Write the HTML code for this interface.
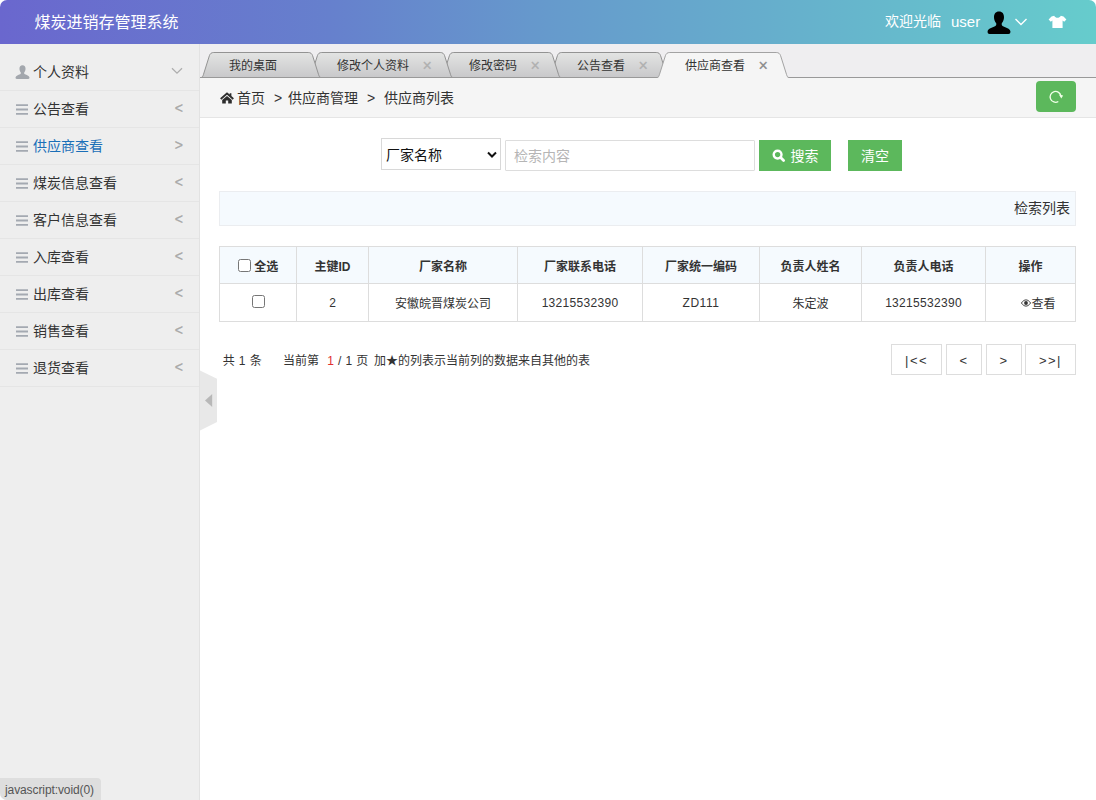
<!DOCTYPE html>
<html lang="zh-CN">
<head>
<meta charset="utf-8">
<title>煤炭进销存管理系统</title>
<style>
*{box-sizing:border-box;margin:0;padding:0}
html,body{width:1096px;height:800px;overflow:hidden;background:#fff}
body{font-family:"Liberation Sans","Noto Sans CJK SC",sans-serif;font-size:14px;color:#333;position:relative}
#hdr{position:absolute;left:0;top:0;width:1096px;height:44px;border-radius:7px 7px 0 0;
 background:linear-gradient(90deg,#6a67ce 0%,#6680cd 30%,#669acc 50%,#66b3cc 75%,#66cccc 100%);color:#fff}
#hdr .title{position:absolute;left:34.5px;top:1px;line-height:44px;font-size:16px}
#hdr .wel{position:absolute;left:885px;top:0;line-height:43px;font-size:14px}
#hdr .usr{position:absolute;left:951px;top:0;line-height:43px;font-size:15px}
#side{position:absolute;left:0;top:44px;width:200px;height:756px;background:#eeeeee;border-right:1px solid #e2e2e2;border-bottom-left-radius:7px}
#side ul{list-style:none;margin-top:10px}
#side li{height:37px;line-height:37px;border-bottom:1px solid #e5e5e5;position:relative;padding-left:33px;font-size:14px;color:#333}
#side li.on{color:#1a6fb8}
#side li .ic{position:absolute;left:15px;top:0}
#side li .ar{position:absolute;right:16px;top:-1px;color:#a8a8a8;font-size:14px;-webkit-text-stroke:.3px #a8a8a8}
#tabs{position:absolute;left:200px;top:44px;width:896px;height:34px;background:#efeef0}
#tabs .tt{position:absolute;top:10px;line-height:24px;font-size:12px;color:#333}
#tabs .tx{position:absolute;top:9.5px;line-height:24px;font-size:16px;color:#b0b0b0;margin-left:.5px;-webkit-text-stroke:.3px #b0b0b0}
#tabs .tx.on{color:#8c8c8c;-webkit-text-stroke:.3px #8c8c8c}
#crumb{position:absolute;left:200px;top:78px;width:896px;height:40px;background:#f5f5f5;border-bottom:1px solid #e5e5e5;line-height:41px;font-size:14px}
#crumb .home{position:absolute;left:19.5px;top:13.5px}
#crumb .c1{position:absolute;left:37px;top:0}
#crumb .g1{position:absolute;left:74px;top:0}
#crumb .c2{position:absolute;left:88px;top:0}
#crumb .g2{position:absolute;left:167px;top:0}
#crumb .c3{position:absolute;left:184px;top:0}
#crumb .rf{position:absolute;left:836px;top:3px;width:40px;height:31px;background:#5cb85c;border-radius:4px}
#main{position:absolute;left:200px;top:118px;width:896px;height:682px;background:#fff}
#main .sel{position:absolute;left:181px;top:20px;width:120px;height:32px;border:1px solid #d8d8d8;background:#fff;font-size:14px;line-height:32px;padding-left:4px;color:#111}
#main .inp{position:absolute;left:305px;top:22px;width:250px;height:31px;border:1px solid #ddd;border-radius:1px;background:#fff;font-size:14px;line-height:30px;padding-left:8px;color:#b5b5b5}
#main .btn{position:absolute;top:22px;height:31px;background:#5cb85c;color:#fff;font-size:14px;line-height:32px;text-align:center}
#main .b1{left:559px;width:72px;padding-left:19px}
#main .b2{left:648px;width:54px}
#main .bar{position:absolute;left:19px;top:73px;width:857px;height:35px;background:#f5fafe;border:1px solid #ebedf0;text-align:right;padding-right:5px;line-height:32px;font-size:14px;color:#333}
#tbl{position:absolute;left:19px;top:128px;width:856px;border-collapse:collapse;font-size:12px;color:#333;table-layout:fixed}
#tbl th,#tbl td{border:1px solid #ddd;height:38px;text-align:center;vertical-align:middle;padding:0}
#tbl td{padding-top:1px}
#tbl td.n{letter-spacing:.3px}
#tbl td.c{padding-top:0;padding-bottom:1px}
#tbl th{background:#f5fafe;font-weight:bold;height:37px;padding-top:1px}
#tbl th .cb{top:-2.5px}
.cb{display:inline-block;width:13px;height:13px;border:1px solid #767676;border-radius:2.5px;background:#fff;vertical-align:middle;position:relative;top:-2.5px}
#pg span{position:absolute;top:233px;font-size:12px;line-height:20px;color:#333;white-space:pre;word-spacing:.8px}
#pg b{font-weight:normal;color:#e03030}
.pb{position:absolute;top:226px;height:31px;border:1px solid #ddd;background:#fff;text-align:center;line-height:31px;font-size:13px;color:#333;letter-spacing:1.4px}
#hand{position:absolute;left:200px;top:370px}
#status{position:absolute;left:0;bottom:0;height:22px;width:101px;background:#dedede;border-radius:0 4px 0 7px;font-size:12px;color:#555;line-height:24px;padding-left:5px;letter-spacing:-.1px}
</style>
</head>
<body>
<div id="hdr">
  <div class="title">煤炭进销存管理系统</div>
  <div class="wel">欢迎光临</div>
  <div class="usr">user</div>
  <svg style="position:absolute;left:987px;top:11px" width="24" height="24" viewBox="0 0 24 24"><path d="M12,0.6 C8.6,0.6 7,3 7,6.2 C7,8.6 7.9,10.8 9.2,12.2 C9.5,13.6 9.2,14.6 8,15.2 C5.2,16.6 1.2,17.4 0.6,20.2 C0.4,21.6 1,23 2.6,23 L21.4,23 C23,23 23.6,21.6 23.4,20.2 C22.8,17.4 18.8,16.6 16,15.2 C14.8,14.6 14.5,13.6 14.8,12.2 C16.1,10.8 17,8.6 17,6.2 C17,3 15.4,0.6 12,0.6 Z" fill="#000"/></svg>
  <svg style="position:absolute;left:1014px;top:17px" width="14" height="10" viewBox="0 0 14 10"><path d="M1.5,2 L7,7.5 L12.5,2" fill="none" stroke="#fff" stroke-width="1.4"/></svg>
  <svg style="position:absolute;left:1048px;top:15px" width="19" height="14" viewBox="0 0 19 14"><path d="M6.2,0.8 C7,2.2 8.2,2.8 9.5,2.8 C10.8,2.8 12,2.2 12.8,0.8 L15.5,1.6 L18.4,4.6 L16.2,6.8 L14.6,5.6 L14.6,13 L4.4,13 L4.4,5.6 L2.8,6.8 L0.6,4.6 L3.5,1.6 Z" fill="#fff"/></svg>
</div>
<div id="side">
  <ul>
    <li><svg class="ic" style="top:11px" width="15" height="14" viewBox="0 0 24 23"><path d="M12,0.6 C8.6,0.6 7,3 7,6.2 C7,8.6 7.9,10.8 9.2,12.2 C9.5,13.6 9.2,14.6 8,15.2 C5.2,16.6 1.2,17.4 0.6,20.2 C0.4,21.6 1,23 2.6,23 L21.4,23 C23,23 23.6,21.6 23.4,20.2 C22.8,17.4 18.8,16.6 16,15.2 C14.8,14.6 14.5,13.6 14.8,12.2 C16.1,10.8 17,8.6 17,6.2 C17,3 15.4,0.6 12,0.6 Z" fill="#a3a7ad"/></svg>个人资料<svg style="position:absolute;left:171px;top:13px" width="12" height="8" viewBox="0 0 12 8"><path d="M1,1.2 L6,6.2 L11,1.2" fill="none" stroke="#aeaeae" stroke-width="1.3"/></svg></li>
    <li><svg class="ic" style="left:16px;top:13px" width="12" height="11" viewBox="0 0 12 11"><path d="M0,1.2 H12 M0,5.5 H12 M0,9.8 H12" stroke="#a4a9b1" stroke-width="1.8"/></svg>公告查看<span class="ar">&lt;</span></li>
    <li class="on"><svg class="ic" style="left:16px;top:13px" width="12" height="11" viewBox="0 0 12 11"><path d="M0,1.2 H12 M0,5.5 H12 M0,9.8 H12" stroke="#a4a9b1" stroke-width="1.8"/></svg>供应商查看<span class="ar">&gt;</span></li>
    <li><svg class="ic" style="left:16px;top:13px" width="12" height="11" viewBox="0 0 12 11"><path d="M0,1.2 H12 M0,5.5 H12 M0,9.8 H12" stroke="#a4a9b1" stroke-width="1.8"/></svg>煤炭信息查看<span class="ar">&lt;</span></li>
    <li><svg class="ic" style="left:16px;top:13px" width="12" height="11" viewBox="0 0 12 11"><path d="M0,1.2 H12 M0,5.5 H12 M0,9.8 H12" stroke="#a4a9b1" stroke-width="1.8"/></svg>客户信息查看<span class="ar">&lt;</span></li>
    <li><svg class="ic" style="left:16px;top:13px" width="12" height="11" viewBox="0 0 12 11"><path d="M0,1.2 H12 M0,5.5 H12 M0,9.8 H12" stroke="#a4a9b1" stroke-width="1.8"/></svg>入库查看<span class="ar">&lt;</span></li>
    <li><svg class="ic" style="left:16px;top:13px" width="12" height="11" viewBox="0 0 12 11"><path d="M0,1.2 H12 M0,5.5 H12 M0,9.8 H12" stroke="#a4a9b1" stroke-width="1.8"/></svg>出库查看<span class="ar">&lt;</span></li>
    <li><svg class="ic" style="left:16px;top:13px" width="12" height="11" viewBox="0 0 12 11"><path d="M0,1.2 H12 M0,5.5 H12 M0,9.8 H12" stroke="#a4a9b1" stroke-width="1.8"/></svg>销售查看<span class="ar">&lt;</span></li>
    <li><svg class="ic" style="left:16px;top:13px" width="12" height="11" viewBox="0 0 12 11"><path d="M0,1.2 H12 M0,5.5 H12 M0,9.8 H12" stroke="#a4a9b1" stroke-width="1.8"/></svg>退货查看<span class="ar">&lt;</span></li>
  </ul>
</div>
<div id="tabs">
<svg width="896" height="34" viewBox="0 0 896 34" style="position:absolute;left:0;top:0">
<defs><linearGradient id="tg" x1="0" y1="0" x2="0" y2="1"><stop offset="0" stop-color="#e3e4e3"/><stop offset="1" stop-color="#c8c8ca"/></linearGradient></defs>
<path d="M349.0,33.5 C350.4,33.5 350.9,32.3 351.4,30.7 L357.4,11.7 C358.2,9.5 359.4,8.5 361.8,8.5 L456.2,8.5 C458.6,8.5 459.8,9.5 460.6,11.7 L466.6,30.7 C467.1,32.3 467.6,33.5 469.0,33.5" fill="url(#tg)" stroke="#939393" stroke-width="1"/>
<path d="M241.0,33.5 C242.4,33.5 242.9,32.3 243.4,30.7 L249.4,11.7 C250.2,9.5 251.4,8.5 253.8,8.5 L348.2,8.5 C350.6,8.5 351.8,9.5 352.6,11.7 L358.6,30.7 C359.1,32.3 359.6,33.5 361.0,33.5" fill="url(#tg)" stroke="#939393" stroke-width="1"/>
<path d="M109.0,33.5 C110.4,33.5 110.9,32.3 111.4,30.7 L117.4,11.7 C118.2,9.5 119.4,8.5 121.8,8.5 L240.2,8.5 C242.6,8.5 243.8,9.5 244.6,11.7 L250.6,30.7 C251.1,32.3 251.6,33.5 253.0,33.5" fill="url(#tg)" stroke="#939393" stroke-width="1"/>
<path d="M1.0,33.5 C2.4,33.5 2.9,32.3 3.4,30.7 L9.4,11.7 C10.2,9.5 11.4,8.5 13.8,8.5 L108.2,8.5 C110.6,8.5 111.8,9.5 112.6,11.7 L118.6,30.7 C119.1,32.3 119.6,33.5 121.0,33.5" fill="url(#tg)" stroke="#939393" stroke-width="1"/>
<line x1="0" y1="33.5" x2="896" y2="33.5" stroke="#999" stroke-width="1"/>
<path d="M457.0,33.5 C458.4,33.5 458.9,32.3 459.4,30.7 L465.4,11.7 C466.2,9.5 467.4,8.5 469.8,8.5 L576.2,8.5 C578.6,8.5 579.8,9.5 580.6,11.7 L586.6,30.7 C587.1,32.3 587.6,33.5 589.0,33.5 Z" fill="#f5f5f5" stroke="none"/>
<path d="M457.0,33.5 C458.4,33.5 458.9,32.3 459.4,30.7 L465.4,11.7 C466.2,9.5 467.4,8.5 469.8,8.5 L576.2,8.5 C578.6,8.5 579.8,9.5 580.6,11.7 L586.6,30.7 C587.1,32.3 587.6,33.5 589.0,33.5" fill="none" stroke="#a3a3a3" stroke-width="1"/>
<line x1="458.5" y1="33.5" x2="587.5" y2="33.5" stroke="#f5f5f5" stroke-width="1.2"/>
</svg>
<span class="tt" style="left:29px">我的桌面</span>
<span class="tt" style="left:137px">修改个人资料</span><span class="tx" style="left:222px">×</span>
<span class="tt" style="left:269px">修改密码</span><span class="tx" style="left:330px">×</span>
<span class="tt" style="left:377px">公告查看</span><span class="tx" style="left:438px">×</span>
<span class="tt on" style="left:485px">供应商查看</span><span class="tx on" style="left:558px">×</span>
</div>
<div id="crumb">
<svg class="home" width="14" height="12" viewBox="0 0 14 12"><path d="M7,0.2 L0.1,6.3 L1.3,7.7 L7,2.8 L12.7,7.7 L13.9,6.3 L11.4,4.1 L11.4,1.2 L9.7,1.2 L9.7,2.6 Z M7,4 L2.2,8.1 L2.2,11.6 L5.8,11.6 L5.8,8.6 L8.2,8.6 L8.2,11.6 L11.8,11.6 L11.8,8.1 Z" fill="#2d2d2d"/></svg>
<span class="c1">首页</span><span class="g1">&gt;</span><span class="c2">供应商管理</span><span class="g2">&gt;</span><span class="c3">供应商列表</span>
<div class="rf"><svg width="40" height="31" viewBox="0 0 40 31"><path d="M24.9,15.2 A5.4,5.4 0 1 0 22.3,20.5" fill="none" stroke="#f0ffe8" stroke-width="1.3"/><path d="M22.9,13.6 L27.1,14.4 L25.3,17.6 Z" fill="#f0ffe8"/></svg></div>
</div>
<div id="main">
<div class="sel">厂家名称<svg style="position:absolute;right:3px;top:12px" width="10" height="8" viewBox="0 0 10 8"><path d="M1,1.5 L5,5.5 L9,1.5" fill="none" stroke="#111" stroke-width="2"/></svg></div>
<div class="inp">检索内容</div>
<div class="btn b1"><svg style="position:absolute;left:13px;top:9px" width="14" height="14" viewBox="0 0 14 14"><circle cx="5.6" cy="5.6" r="3.9" fill="none" stroke="#fff" stroke-width="2.4"/><path d="M8.6,8.6 L11.6,11.6" stroke="#fff" stroke-width="2.8" stroke-linecap="round"/></svg>搜索</div>
<div class="btn b2">清空</div>
<div class="bar">检索列表</div>
<table id="tbl">
<colgroup><col style="width:77px"><col style="width:72px"><col style="width:149px"><col style="width:125px"><col style="width:117px"><col style="width:102px"><col style="width:124px"><col style="width:90px"></colgroup>
<tr><th><span class="cb"></span> 全选</th><th>主键ID</th><th>厂家名称</th><th>厂家联系电话</th><th>厂家统一编码</th><th>负责人姓名</th><th>负责人电话</th><th>操作</th></tr>
<tr><td><span class="cb"></span></td><td>2</td><td class="c">安徽皖晋煤炭公司</td><td class="n">13215532390</td><td class="n" style="letter-spacing:.55px">ZD111</td><td class="c">朱定波</td><td class="n">13215532390</td><td class="c"><svg style="vertical-align:1px;margin-left:16px" width="10" height="8" viewBox="0 0 10 8"><path d="M0.4,4 C2,1.6 3.6,0.9 5,0.9 C6.4,0.9 8,1.6 9.6,4 C8,6.4 6.4,7.1 5,7.1 C3.6,7.1 2,6.4 0.4,4 Z" fill="none" stroke="#333" stroke-width="0.9"/><circle cx="5" cy="4" r="1.9" fill="#333"/></svg>查看</td></tr>
</table>
<div id="pg"><span style="left:22.7px">共 1 条</span><span style="left:82.9px">当前第  <b>1</b> / 1 页</span><span style="left:174.1px">加★的列表示当前列的数据来自其他的表</span></div>
<div class="pb" style="left:691px;width:51px">|&lt;&lt;</div>
<div class="pb" style="left:746px;width:36px">&lt;</div>
<div class="pb" style="left:786px;width:36px">&gt;</div>
<div class="pb" style="left:825px;width:51px">&gt;&gt;|</div>
</div>
<svg id="hand" width="18" height="62" viewBox="0 0 18 62"><path d="M0,0.5 L17,8.8 L17,51.9 L0,60.6 Z" fill="#e8e8e8"/><path d="M12.2,24 L5,30.5 L12.2,37 Z" fill="#b8b8b8"/></svg>
<div id="status">javascript:void(0)</div>
</body>
</html>
